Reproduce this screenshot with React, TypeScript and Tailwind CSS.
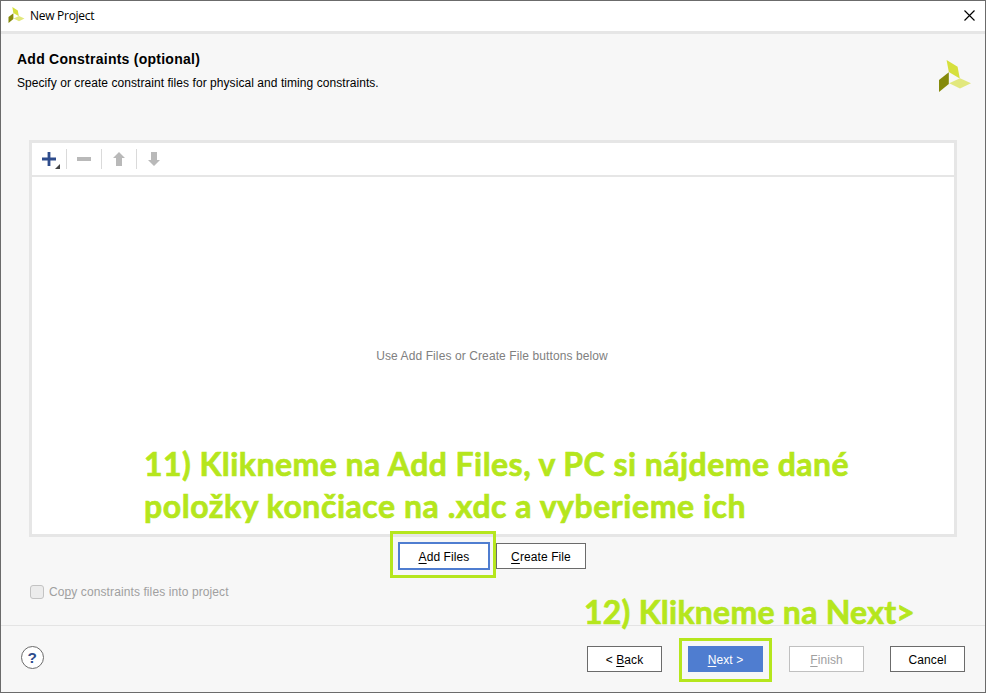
import React from "react";

const ARIAL = "font-['Liberation_Sans',Arial,sans-serif]";

function Logo({ className }: { className: string }) {
  return (
    <svg className={className} viewBox="0 0 32 32" fill="none">
      <path d="M7.6 0 18.6 6.8 20.8 18.6 9.8 12Z" fill="#d6e03d" />
      <path d="M0 20 9.8 12.3V24L0 32Z" fill="#858a0b" />
      <path d="M10.2 23.2 21 18.2 32 23.2 21 28.6Z" fill="#e2e87d" />
    </svg>
  );
}

function Separator() {
  return <div className="h-5 w-px bg-[#dadada]" />;
}

type ButtonProps = {
  children: React.ReactNode;
  className: string;
};

function DialogButton({ children, className }: ButtonProps) {
  return (
    <button type="button" className={`flex items-center justify-center whitespace-pre pt-px text-[12px] leading-none tracking-[0.1px] ${className}`}>
      {children}
    </button>
  );
}

function Mnemonic({ children }: { children: string }) {
  return <span className="underline decoration-1 underline-offset-2 [text-decoration-skip-ink:none]">{children}</span>;
}

export default function App() {
  return (
    <div className={`relative flex h-[693px] w-[986px] flex-col overflow-hidden border border-[#6b6b6b] bg-[#f7f7f7] text-black ${ARIAL}`}>
      <header className="flex h-[33px] shrink-0 items-center border-b-[3px] border-[#e6e6e6] bg-white pl-[7px] pr-[10px]">
        <Logo className="-mt-0.5 h-4 w-[17px]" />
        <h1 className="ml-[5px] flex-1 font-['Open_Sans','Noto_Sans',sans-serif] text-[12px] leading-4 tracking-[-0.28px]">New Project</h1>
        <svg className="-mt-0.5 h-[11px] w-[11px]" viewBox="0 0 11 11" stroke="#000" strokeWidth="1.15">
          <path d="M.5.5l10 10M10.5.5l-10 10" />
        </svg>
      </header>

      <section className="flex h-[106px] shrink-0 justify-between pl-4 pr-[14px]">
        <div className="pt-[17px]">
          <h2 className="text-[14px] font-bold leading-4 tracking-[0.25px]">Add Constraints (optional)</h2>
          <p className="mt-2 text-[12px] leading-4 tracking-[0.06px]">Specify or create constraint files for physical and timing constraints.</p>
        </div>
        <Logo className="mt-[26px] h-8 w-8" />
      </section>

      <main className="ml-7 flex h-[397px] w-[928px] shrink-0 flex-col border-[3px] border-[#e6e6e6] bg-white">
        <div className="flex h-[34px] shrink-0 items-center border-b-2 border-[#e6e6e6] pl-[9px]">
          <svg className="h-5 w-[25px]" viewBox="0 0 25 20">
            <path d="M1 10h14M8 3v14" stroke="#2e4c8c" strokeWidth="2.8" />
            <path d="M19 15v5h-5Z" fill="#444" />
          </svg>
          <Separator />
          <div className="flex w-[34px] justify-center">
            <div className="h-1 w-[14px] bg-[#b9b9b9]" />
          </div>
          <Separator />
          <svg className="h-[14px] w-[34px]" viewBox="0 0 34 14" fill="#b9b9b9">
            <path d="M17 0l6 6h-3v8h-6V6h-3Z" />
          </svg>
          <Separator />
          <svg className="h-[14px] w-[34px]" viewBox="0 0 34 14" fill="#b9b9b9">
            <path d="M17 14l6-6h-3V0h-6v8h-3Z" />
          </svg>
        </div>
        <div className="flex flex-1 items-center justify-center pr-[2px]">
          <p className="text-[12px] leading-4 tracking-[0.1px] text-[#808080]">Use Add Files or Create File buttons below</p>
        </div>
      </main>

      <div className="ml-[397px] mt-[5px] flex h-7 shrink-0 items-center gap-[6px]">
        <DialogButton className="h-7 w-[92px] border-2 border-[#4f7dd0] bg-white"><Mnemonic>A</Mnemonic>dd Files</DialogButton>
        <DialogButton className="h-[26px] w-[90px] border border-[#6b6b6b] bg-white"><Mnemonic>C</Mnemonic>reate File</DialogButton>
      </div>

      <div className="ml-[29px] mt-[14px] flex h-4 shrink-0 items-center gap-[5px] text-[12px] tracking-[0.1px] text-[#a0a0a0]">
        <span className="h-[14px] w-[14px] rounded-[3px] border border-[#c3c3c3] bg-[#ececec]" />
        <span>Co<Mnemonic>p</Mnemonic>y constraints files into project</span>
      </div>

      <footer className="mt-[25px] flex flex-1 items-start border-t border-[#e4e4e4] pl-5 pr-5 pt-5">
        <button type="button" className="flex h-[23px] w-[23px] items-center justify-center rounded-full border border-[#6b6b6b] bg-white text-[14px] font-bold leading-none text-[#2e4c8c]"><span className="scale-x-110">?</span></button>
        <div className="ml-auto flex gap-[26px]">
          <DialogButton className="h-[26px] w-[75px] border border-[#6b6b6b] bg-white">{"< "}<Mnemonic>B</Mnemonic>ack</DialogButton>
          <DialogButton className="h-[26px] w-[75px] bg-[#4f7dd0] text-white"><Mnemonic>N</Mnemonic>{"ext >"}</DialogButton>
          <DialogButton className="h-[26px] w-[75px] border border-[#c0c0c0] bg-white text-[#a0a0a0]"><Mnemonic>F</Mnemonic>inish</DialogButton>
          <DialogButton className="h-[26px] w-[75px] border border-[#6b6b6b] bg-white">Cancel</DialogButton>
        </div>
      </footer>

      <div className="absolute left-[389px] top-[530px] h-[47px] w-[106px] border-[3px] border-[#b5e61d]" />
      <div className="absolute left-[678px] top-[637px] h-[44px] w-[93px] border-[3px] border-[#b5e61d]" />
      <div className="absolute left-[143px] top-[442px] whitespace-nowrap font-['Lato',sans-serif] text-[32px] font-bold leading-[42px] text-[#b5e61d] [-webkit-text-stroke:0.7px_#b5e61d]">
        <p className="tracking-[0.45px]">11) Klikneme na Add Files, v PC si nájdeme dané</p>
        <p className="tracking-[0.54px]">položky končiace na .xdc a vyberieme ich</p>
      </div>
      <p className="absolute left-[583px] top-[590px] whitespace-nowrap font-['Lato',sans-serif] text-[32px] font-bold leading-[42px] tracking-[0.25px] text-[#b5e61d] [-webkit-text-stroke:0.7px_#b5e61d]">12) Klikneme na Next&gt;</p>
    </div>
  );
}
